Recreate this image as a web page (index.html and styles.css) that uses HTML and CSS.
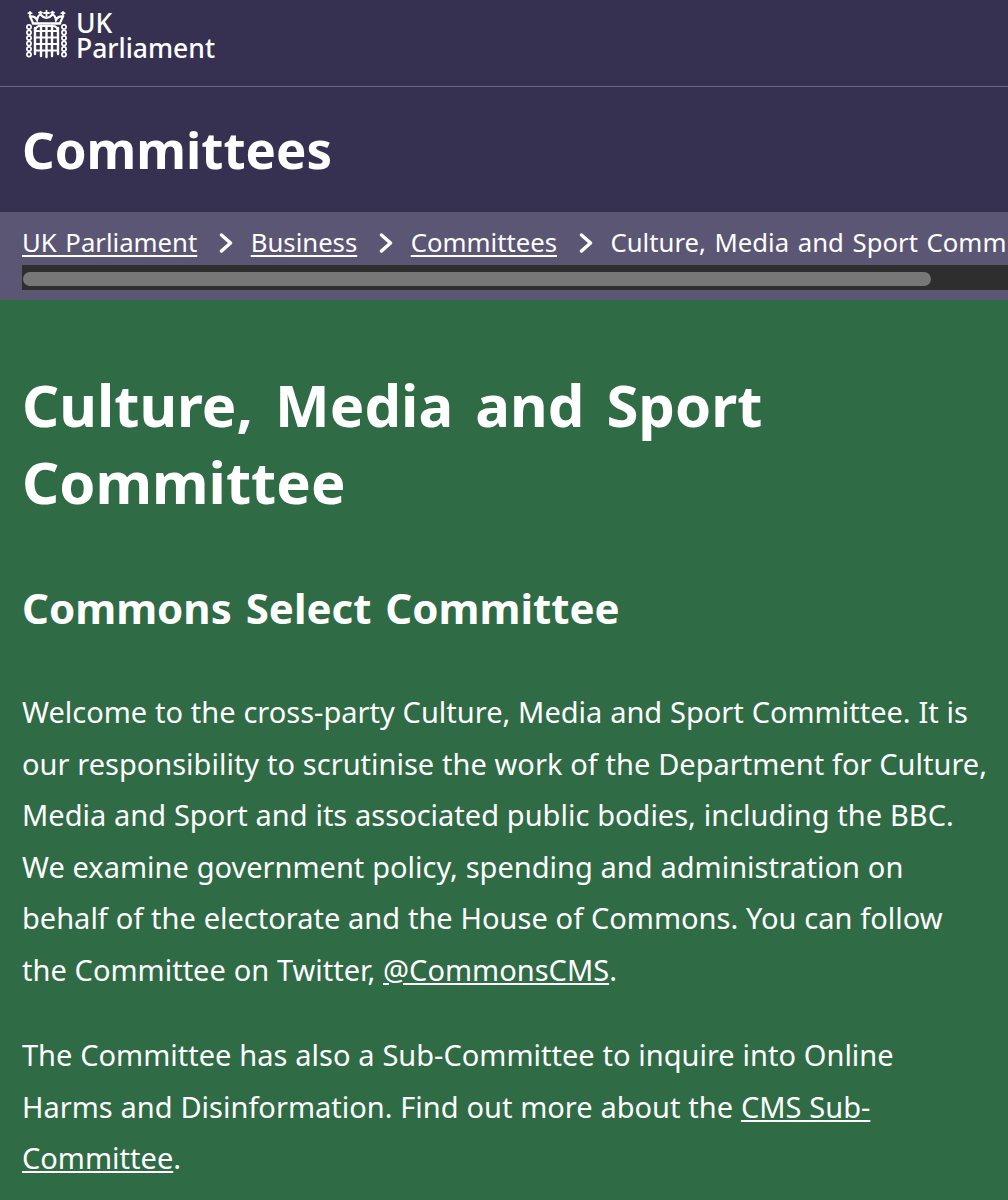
FILE: index.html
```html
<!DOCTYPE html>
<html lang="en">
<head>
<meta charset="utf-8">
<title>Culture, Media and Sport Committee</title>
<link rel="stylesheet" href="styles.css">
</head>
<body>
<header class="topbar">
  <a class="logo" href="#">
    <svg class="logo-mark" viewBox="0 0 41 49" width="41" height="49" aria-hidden="true">
      <g fill="none" stroke="#fff" stroke-linecap="round">
        <path d="M7 13.5 H34" stroke-width="2.4"/>
        <path d="M7 13 L4 6.5 Q9 6 11 10 Q12 5 14.5 4.5 Q17 7.5 20.5 8 Q24 7.5 26.5 4.5 Q29 5 30 10 Q32 6 37 6.5 L34 13" stroke-width="2.2"/>
        <path d="M4 5V2M2.4 3.2H5.6M14.5 4V1.6M13 2.6H16M20.5 7V0.5M18 3H23M26.5 4V1.6M25 2.6H28M37 5V2M35.4 3.2H38.6" stroke-width="1.8"/>
        <path d="M9 21 Q10 16 14 16 H27 Q31 16 32 21" stroke-width="2.2"/>
        <path d="M9 21H32M9 27.5H32M9 34H32M9 40.5H32" stroke-width="2.2"/>
        <path d="M9 18V44M15 16V46M20.5 16V47M26 16V46M32 18V44" stroke-width="2.4"/>
      </g>
      <g fill="none" stroke="#fff" stroke-width="1.7">
        <circle cx="3" cy="17" r="2.1"/><circle cx="3" cy="22.5" r="2.1"/><circle cx="3" cy="28" r="2.1"/><circle cx="3" cy="33.5" r="2.1"/><circle cx="3" cy="39" r="2.1"/><circle cx="3" cy="44.5" r="2.1"/>
        <circle cx="38" cy="17" r="2.1"/><circle cx="38" cy="22.5" r="2.1"/><circle cx="38" cy="28" r="2.1"/><circle cx="38" cy="33.5" r="2.1"/><circle cx="38" cy="39" r="2.1"/><circle cx="38" cy="44.5" r="2.1"/>
      </g>
    </svg>
    <span class="logo-text">UK<br>Parliament</span>
  </a>
</header>
<div class="section-band"><div class="section-title">Committees</div></div>
<nav class="crumbs">
  <div class="crumb-row">
    <a href="#">UK Parliament</a><span class="chev"><svg viewBox="0 0 14 20" width="14" height="20"><path d="M2.5 2 L11.5 10 L2.5 18" fill="none" stroke="#fff" stroke-width="3.4" stroke-linecap="round" stroke-linejoin="round"/></svg></span>
    <a href="#">Business</a><span class="chev"><svg viewBox="0 0 14 20" width="14" height="20"><path d="M2.5 2 L11.5 10 L2.5 18" fill="none" stroke="#fff" stroke-width="3.4" stroke-linecap="round" stroke-linejoin="round"/></svg></span>
    <a href="#">Committees</a><span class="chev"><svg viewBox="0 0 14 20" width="14" height="20"><path d="M2.5 2 L11.5 10 L2.5 18" fill="none" stroke="#fff" stroke-width="3.4" stroke-linecap="round" stroke-linejoin="round"/></svg></span>
    <span class="current">Culture, Media and Sport Committee</span>
  </div>
  <div class="scrollbar"><div class="thumb"></div></div>
</nav>
<main class="hero">
  <h1>Culture, Media and Sport Committee</h1>
  <h2>Commons Select Committee</h2>
  <p>Welcome to the cross-party Culture, Media and Sport Committee. It is our responsibility to scrutinise the work of the Department for Culture, Media and Sport and its associated public bodies, including the BBC. We examine government policy, spending and administration on behalf of the electorate and the House of Commons. You can follow the Committee on Twitter, <a href="#">@CommonsCMS</a>.</p>
  <p>The Committee has also a Sub-Committee to inquire into Online Harms and Disinformation. Find out more about the <a href="#">CMS Sub-Committee</a>.</p>
</main>
</body>
</html>
```
FILE: styles.css
```css
* { box-sizing: border-box; }
html, body { margin: 0; height: 1200px; overflow: hidden; }
body { background: #2f6b45; color: #fff; font-family: "Noto Sans", "Open Sans", sans-serif; }
a { color: #fff; }
.topbar { height: 87px; background: #373151; border-bottom: 1px solid #6c6785; padding: 10px 26px 0; }
.logo { display: flex; gap: 9px; text-decoration: none; }
.logo-mark { flex: none; width: 41px; height: 49px; }
.logo-text { font-size: 26.5px; line-height: 25px; font-weight: 500; padding-top: 1px; }
.section-band { height: 125px; background: #373151; padding: 0 22px; display: flex; align-items: center; }
.section-title { font-size: 51px; font-weight: 700; line-height: 1; }
.crumbs { height: 88px; background: #5c5675; padding: 12px 0 0 22px; overflow: hidden; }
.crumb-row { display: flex; align-items: center; white-space: nowrap; font-size: 25.7px; word-spacing: 2px; line-height: 38px; height: 38px; }
.crumb-row a { flex: none; text-underline-offset: 3px; }
.chev { flex: none; width: 53.5px; padding-left: 4px; display: flex; justify-content: center; }
.current { flex: none; }
.scrollbar { height: 25px; margin-top: 3px; background: #2e2e2e; padding: 7px 0 4px 1px; width: 986px; }
.thumb { width: 908px; height: 14px; border-radius: 7px; background: #777; }
.hero { padding: 66px 16px 0 22px; }
h1 { margin: 0; font-size: 58px; line-height: 77px; font-weight: 700; word-spacing: 7px; width: 900px; }
h2 { margin: 60px 0 0; font-size: 42px; line-height: 56px; font-weight: 700; word-spacing: 3px; }
p { margin: 0; font-size: 29px; line-height: 51.5px; word-spacing: 0.3px; }
h2 + p { margin-top: 50px; }
p + p { margin-top: 34px; }
```
